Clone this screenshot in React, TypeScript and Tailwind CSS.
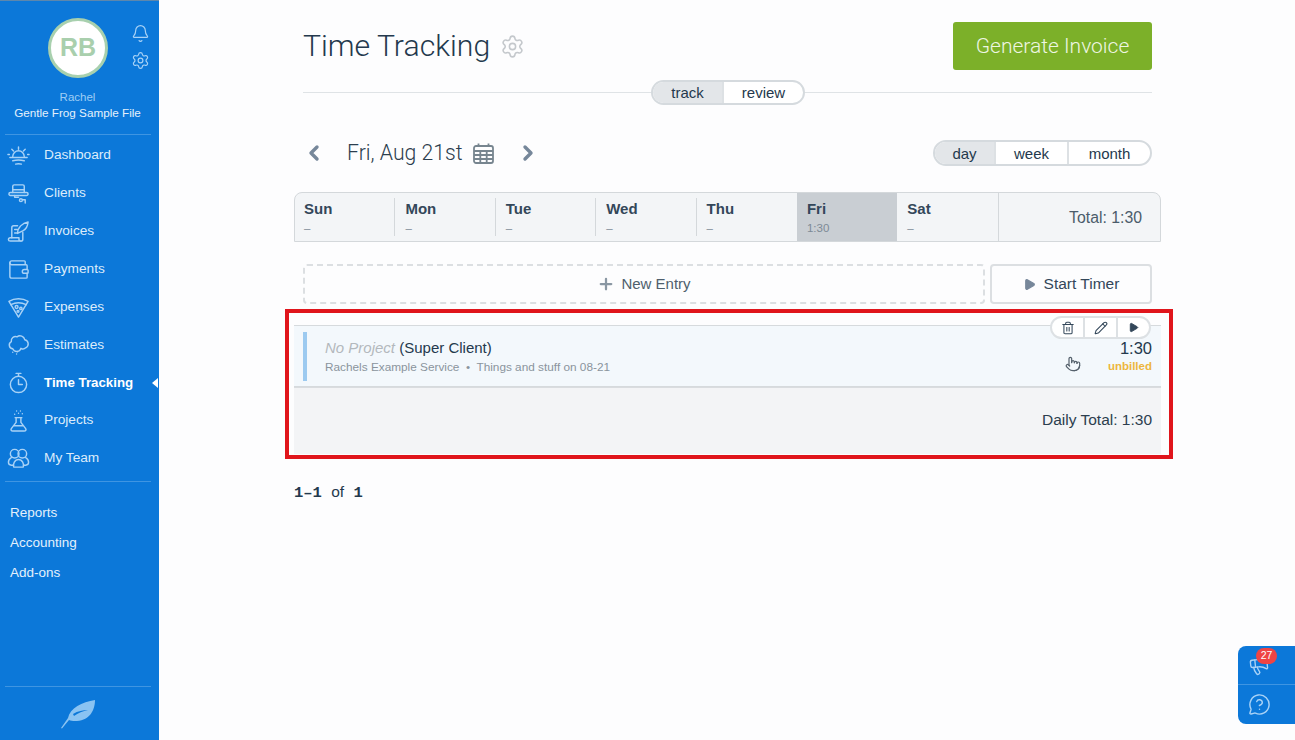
import { Bell, Settings, ChevronLeft, ChevronRight, Trash2, Pencil, Play, Plus, Megaphone, MessageCircleQuestion, Wallet, Pointer } from "lucide-react";
import type { ReactNode } from "react";

const S = ({ children }: { children: ReactNode }) => (
  <svg width="23" height="23" viewBox="0 0 24 24" fill="none" stroke="currentColor" strokeWidth="1.5" strokeLinecap="round" strokeLinejoin="round">{children}</svg>
);

const nav: { label: string; icon: ReactNode; active?: boolean }[] = [
  { label: "Dashboard", icon: <S><path d="M6 13a6 6 0 0 1 12 0" /><path d="M3 14h18M6 17.500c4-1 8-1 12 0M9 21c2-.6 4-.6 6 0M12 3v2.500M5 5.500l1.800 1.800M19 5.500l-1.800 1.800M1 11h1.500M21.500 11H23" /></S> },
  { label: "Clients", icon: <S><path d="M6 11V4.500A1.500 1.500 0 0 1 7.500 3h9A1.500 1.500 0 0 1 18 4.500V11" /><path d="M6 8h12" /><path d="M2 12.500a1.500 1.500 0 0 1 1.500-1.500h17a1.500 1.500 0 0 1 0 3h-17A1.500 1.500 0 0 1 2 12.500Z" /><path d="M8 14v2h4M13 19a1.500 1.500 0 1 1 3 0 1.500 1.500 0 0 1-3 0ZM16 18.500h3M19 18.500V22" /></S> },
  { label: "Invoices", icon: <S><path d="M1.500 20.500c0-1.200 1-2 2-2h9v1.500c0 1.200 1 2 2 2h-11c-1 0-2-.300-2-1.500Z" /><path d="M5 18.500V8c0-1.200.8-2 2-2h4M14.500 22c1.200 0 2-.8 2-2v-7" /><path d="M11 14c0-6 5-11 11-12-.5 5-3 8-5 9l-6 3ZM8 10h3M8 13.500h2.500" /></S> },
  { label: "Payments", icon: <Wallet size={23} strokeWidth={1.5} /> },
  { label: "Expenses", icon: <S><path d="M2 5.500c6-3.500 14-3.500 20 0L12 22 2 5.500Z" /><path d="M4 9c5-2.500 11-2.500 16 0" /><circle cx="10" cy="11.500" r="1.500" /><circle cx="14.500" cy="13" r="1.200" /><circle cx="11.500" cy="16" r="1" /></S> },
  { label: "Estimates", icon: <S><path d="M6 16.500a4 4 0 0 1-1.500-7.500 4.500 4.500 0 0 1 6-5 5 5 0 0 1 8 3 4.500 4.500 0 0 1 1 8.500 4 4 0 0 1-5 .5 4.500 4.500 0 0 1-8.500.5Z" /><path d="M6 20h.01M10 22h.01M11 19.500h.01" /></S> },
  { label: "Time Tracking", icon: <S><circle cx="12" cy="14" r="8.500" /><path d="M9.500 2.500h5M12 2.500v3M12 9v5h4" /></S>, active: true },
  { label: "Projects", icon: <S><path d="M9.500 9v5L4.500 20.500c-.8 1.200 0 2.500 1.500 2.500h12c1.500 0 2.300-1.300 1.500-2.500L14.500 14V9M8.500 9h7M7 17.500h10" /><path d="M10 2h.01M14 2h.01M12 4.500h.01M16 5h.01M8 5.500h.01" /></S> },
  { label: "My Team", icon: <S><circle cx="8" cy="7" r="4.500" /><circle cx="16" cy="7" r="4.500" /><path d="M4.500 11C2.500 12 1.500 14 1.500 16c0 2 1.500 3 3 3H7M19.500 11c2 1 3 3 3 5 0 2-1.500 3-3 3H17" /><path d="M7 21c-1-3 1-8 5-8s6 5 5 8H7Z" /></S> },
];

const days = [
  ["Sun", "–"], ["Mon", "–"], ["Tue", "–"], ["Wed", "–"], ["Thu", "–"], ["Fri", "1:30"], ["Sat", "–"],
];

export default function App() {
  return (
    <div className="flex h-[740px] w-[1295px] overflow-hidden bg-[#fdfdfe] font-['Liberation_Sans',sans-serif] text-[#24394d]">
      <aside className="relative flex w-[159px] shrink-0 flex-col border-t border-[#5d87ad] bg-[#0c78d9] text-[#dcecfb]">
        <div className="relative flex h-[133px] flex-col items-center pt-[17px]">
          <div className="-ml-[3px] flex h-[60px] w-[60px] items-center justify-center rounded-full border-[3px] border-[#a8d0ae] bg-white text-[25px] font-bold text-[#a9cfad]">RB</div>
          <div className="absolute left-[131px] top-[23px] flex flex-col gap-[8px] text-[#a9d2f6]">
            <Bell size={19} strokeWidth={1.500} />
            <Settings size={19} strokeWidth={1.500} />
          </div>
          <div className="-ml-[4px] mt-[11px] text-[11.500px] leading-[16px] text-[#9fcdf5]">Rachel</div>
          <div className="-ml-[4px] -mt-[1px] text-[11.700px] leading-[17px] text-[#e4f1fc]">Gentle Frog Sample File</div>
        </div>
        <div className="ml-[5px] mr-[8px] border-t border-[#3f95e2]" />
        <nav className="flex flex-col pt-[1.500px]">
          {nav.map((n) => (
            <div key={n.label} className={`relative flex h-[37.900px] items-center ${n.active ? "font-bold text-white" : ""}`}>
              <span className="flex w-[44px] items-center justify-start pl-[7px] text-[#a9d2f6]">{n.icon}</span>
              <span className={n.active ? "text-[13.300px]" : "text-[13.700px]"}>{n.label}</span>
              {n.active && <span className="absolute right-[1px] top-[14px] h-0 w-0 border-y-[5px] border-r-[6px] border-y-transparent border-r-white" />}
            </div>
          ))}
        </nav>
        <div className="ml-[5px] mr-[8px] mt-[3px] border-t border-[#3f95e2]" />
        <div className="flex flex-col px-[10px] pt-[16px] text-[13.500px] text-[#e4f1fc]">
          <div className="h-[30px] leading-[30px]">Reports</div>
          <div className="h-[30px] leading-[30px]">Accounting</div>
          <div className="h-[30px] leading-[30px]">Add-ons</div>
        </div>
        <div className="ml-[5px] mr-[8px] mt-auto flex h-[54px] items-center justify-center border-t border-[#3f95e2] text-[#8ac3f2]">
          <svg width="36" height="30" viewBox="0 0 36 30" fill="currentColor"><path d="M1 29 8 19C10 9 22 3 35 1c0 10-5 20-18 21-3 .2-6 0-8-1L2 29.500Z" /><path d="M13 15c5-3 10-4 15-4-5 1-10 3-14 6Z" fill="#0c78d9" /></svg>
        </div>
      </aside>

      <main className="relative ml-[126px] flex w-[888px] flex-col">
        <div className="ml-[18px] w-[849px]">
          <div className="flex h-[92px] justify-between pt-[22px]">
            <div className="flex h-[48px] items-center gap-[10px]">
              <h1 className="font-['Roboto',sans-serif] text-[30.200px] font-light">Time Tracking</h1>
              <Settings size={25} strokeWidth={1.500} className="text-[#c4c8cc]" />
            </div>
            <button className="h-[48px] w-[199px] rounded-[3px] bg-[#7cb029] pt-[2px] font-['Roboto',sans-serif] text-[21px] font-light text-[#eef6e2]">Generate Invoice</button>
          </div>
          <div className="relative h-[1px] bg-[#dfe3e6]">
            <div className="absolute left-[348px] top-[-12px] flex h-[25px] w-[154px] overflow-hidden rounded-full border-2 border-[#d5dade] bg-white text-[15px] leading-[21px]">
              <span className="w-[71px] border-r-2 border-[#dde1e4] bg-[#e3e6e9] text-center">track</span>
              <span className="flex-1 text-center">review</span>
            </div>
          </div>
          <div className="mt-[47px] flex h-[26px] items-center justify-between">
            <div className="flex items-center">
              <ChevronLeft size={24} strokeWidth={3.400} className="-ml-[1px] text-[#76879a]" />
              <span className="ml-[21px] font-['Roboto',sans-serif] text-[21.200px] font-light text-[#2c3e4e]">Fri, Aug 21st</span>
              <svg width="23" height="23" viewBox="0 0 23 23" fill="none" stroke="#77858f" strokeWidth="1.800" className="ml-[9px]"><rect x="2" y="4" width="19" height="17" rx="2" /><path d="M2 9h19M2 13h19M2 17h19M8.300 9v12M14.700 9v12M6.500 1.500V5M16.500 1.500V5" /></svg>
              <ChevronRight size={24} strokeWidth={3.400} className="ml-[21px] text-[#76879a]" />
            </div>
            <div className="flex h-[26px] w-[219px] overflow-hidden rounded-full border-2 border-[#d5dade] bg-white text-[15px] leading-[24px]">
              <span className="w-[61px] border-r-2 border-[#dde1e4] bg-[#e3e6e9] text-center">day</span>
              <span className="w-[73px] border-r-2 border-[#dde1e4] text-center">week</span>
              <span className="flex-1 text-center">month</span>
            </div>
          </div>
        </div>

        <div className="ml-[9px] mt-[26px] flex h-[50px] w-[867px] overflow-hidden rounded-t-[8px] border border-[#d4d8db] bg-[#f3f5f7]">
          {days.map(([d, v], i) => (
            <div key={d} className={`relative w-[100.400px] shrink-0 pt-[8px] ${i === 0 ? "pl-[9px]" : "pl-[10px]"} ${d === "Fri" ? "bg-[#c9ced3]" : ""}`}>
              <div className="text-[15px] font-bold leading-[16px] text-[#33475a]">{d}</div>
              <div className="mt-[4px] text-[11.500px] leading-[14px] text-[#7d8a96]">{v}</div>
              {i < 4 && <span className="absolute right-0 top-[5px] h-[38px] w-[1px] bg-[#d4d8db]" />}
            </div>
          ))}
          <div className="flex flex-1 items-center justify-end border-l border-[#d4d8db] pr-[18px] pt-[2px] text-[15.800px] text-[#4b5c6b]">Total: 1:30</div>
        </div>

        <div className="ml-[18px] mt-[22px] flex h-[40px] w-[849px] gap-[5px]">
          <div className="flex w-[682px] items-center justify-center gap-[6px] rounded-[4px] border-2 border-dashed border-[#dcdfe2] text-[15px] text-[#4f5f6d]">
            <Plus size={18} strokeWidth={3} className="text-[#8a97a3]" />New Entry
          </div>
          <div className="flex flex-1 items-center justify-center gap-[8px] rounded-[4px] border-2 border-[#dcdfe2] text-[15.500px] text-[#33475a]">
            <Play size={13} fill="currentColor" className="text-[#77879a]" />Start Timer
          </div>
        </div>

        <section className="mt-[5px] flex h-[150px] w-[888px] flex-col border-4 border-[#e0151c] pb-[1px] pl-[5px] pr-[8px] pt-[12px]">
          <div className="relative flex h-[62px] shrink-0 items-center border-y border-[#d6dadd] bg-[#f3f8fc] pl-[9px] pr-[9px]">
            <span className="h-[49px] w-[4px] bg-[#9ccaf0]" />
            <div className="ml-[18px] flex-1 pt-[1px]">
              <div className="text-[15px] leading-[20px]"><i className="text-[#b3b8bd]">No Project</i> <span className="text-[#24394d]">(Super Client)</span></div>
              <div className="mt-[2px] text-[11.800px] leading-[15px] text-[#8a949d]">Rachels Example Service&nbsp; •&nbsp; Things and stuff on 08-21</div>
            </div>
            <Pointer size={16} strokeWidth={1.800} className="absolute left-[771px] top-[30px] text-[#55616c]" />
            <div className="text-right">
              <div className="text-[16.500px] leading-[20px]">1:30</div>
              <div className="mt-[1px] text-[11.500px] font-bold leading-[15px] text-[#edb63e]">unbilled</div>
            </div>
            <div className="absolute right-[10px] top-[-10px] flex h-[23px] w-[101px] items-center overflow-hidden rounded-full border-2 border-[#dde1e4] bg-white text-[#33475a]">
              <span className="flex h-full w-[33px] items-center justify-center border-r-2 border-[#dde1e4]"><Trash2 size={14} strokeWidth={1.800} /></span>
              <span className="flex h-full w-[33px] items-center justify-center border-r-2 border-[#dde1e4]"><Pencil size={14} strokeWidth={1.800} /></span>
              <span className="flex flex-1 items-center justify-center"><Play size={11} fill="currentColor" /></span>
            </div>
          </div>
          <div className="flex flex-1 items-center justify-end border-t border-[#d9dcdf] bg-[#f3f4f6] pb-[3px] pr-[9px] text-[15.500px] text-[#2c3e4e]">Daily Total: 1:30</div>
        </section>

        <div className="ml-[9px] mt-[24px] font-['Liberation_Mono',monospace] text-[15.500px] font-bold leading-[18px]">1–1 <span className="font-['Liberation_Sans',sans-serif] font-normal">of</span> 1</div>
      </main>

      <div className="absolute left-[1238px] top-[646px] flex h-[78px] w-[57px] flex-col rounded-l-[8px] bg-[#0c78d9] text-[#a9d2f6]">
        <div className="relative flex h-[39px] items-center border-b border-[#3f95e2] pl-[10px]">
          <Megaphone size={22} strokeWidth={1.500} className="-rotate-6" />
          <span className="absolute left-[18px] top-[2px] flex h-[16px] w-[21px] items-center justify-center rounded-full bg-[#ef4444] text-[10.500px] text-white">27</span>
        </div>
        <div className="flex flex-1 items-center pl-[10px]"><MessageCircleQuestion size={23} strokeWidth={1.500} /></div>
      </div>
    </div>
  );
}
